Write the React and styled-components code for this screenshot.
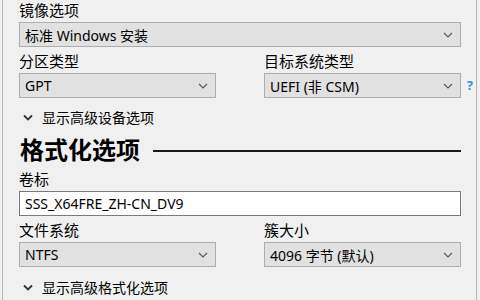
import React from "react";
import styled, { createGlobalStyle } from "styled-components";

const Global = createGlobalStyle`
  html, body {
    margin: 0;
    padding: 0;
    background: #f0f0f0;
  }
  body {
    font-family: "Noto Sans", "Noto Sans CJK SC", sans-serif;
    color: #000;
  }
`;

const Window = styled.div`
  box-sizing: border-box;
  width: 475px;
  height: 300px;
  margin-left: 2px;
  border-left: 1px solid #b4b4b4;
  border-right: 1px solid #b4b4b4;
  padding: 0 15px 0 16px;
  overflow: hidden;
`;

const Label = styled.div`
  font-size: 15px;
  line-height: 20px;
  height: 20px;
  margin-top: ${(p) => p.$top || 0}px;
  white-space: nowrap;
`;

const Field = styled.div`
  box-sizing: border-box;
  position: relative;
  height: 25px;
  margin-top: 2px;
  display: flex;
  align-items: center;
  padding: 0 24px 0 5px;
  font-size: 14px;
  white-space: nowrap;
  background: ${(p) => (p.$input ? "#ffffff" : "#e1e1e1")};
  border: 1px solid ${(p) => (p.$input ? "#7a7a7a" : "#adadad")};
`;

const Caret = styled.svg`
  position: absolute;
  right: 7px;
  top: 50%;
  margin-top: -3px;
`;

const Row = styled.div`
  display: grid;
  grid-template-columns: 197px 197px;
  column-gap: 48px;
  margin-top: ${(p) => p.$top || 0}px;
`;

const Col = styled.div`
  position: relative;
`;

const Help = styled.span`
  position: absolute;
  right: -12px;
  top: 25px;
  font-size: 13px;
  color: #3c8fd8;
  font-weight: bold;
`;

const Toggle = styled.div`
  display: flex;
  align-items: center;
  gap: 9px;
  height: 20px;
  margin-top: ${(p) => p.$top || 0}px;
  padding-left: 4px;
  font-size: 14px;
  white-space: nowrap;
`;

const Heading = styled.div`
  display: flex;
  align-items: center;
  gap: 13px;
  height: 28px;
  margin-top: ${(p) => p.$top || 0}px;
  font-size: 24px;
  font-weight: bold;
  line-height: 28px;
  padding-left: 1px;
  &::after {
    content: "";
    flex: 1;
    height: 2px;
    background: #1a1a1a;
    margin-top: 1px;
  }
`;

function Chevron() {
  return (
    <Caret width="10" height="6" viewBox="0 0 10 6">
      <polyline points="1,1 5,5 9,1" fill="none" stroke="#5a5a5a" strokeWidth="1.2" />
    </Caret>
  );
}

function Select({ children }) {
  return (
    <Field>
      {children}
      <Chevron />
    </Field>
  );
}

function Disclosure({ top, children }) {
  return (
    <Toggle $top={top}>
      <svg width="10" height="7" viewBox="0 0 10 7">
        <polyline points="1,1.5 5,5.5 9,1.5" fill="none" stroke="#333" strokeWidth="1.8" />
      </svg>
      <span>{children}</span>
    </Toggle>
  );
}

export default function App() {
  return (
    <>
      <Global />
      <Window>
        <Label $top={0}>镜像选项</Label>
        <Select>标准 Windows 安装</Select>
        <Row $top={4}>
          <Col>
            <Label>分区类型</Label>
            <Select>GPT</Select>
          </Col>
          <Col>
            <Label>目标系统类型</Label>
            <Select>UEFI (非 CSM)</Select>
            <Help>?</Help>
          </Col>
        </Row>
        <Disclosure top={9}>显示高级设备选项</Disclosure>
        <Heading $top={9}>格式化选项</Heading>
        <Label $top={5}>卷标</Label>
        <Field $input>SSS_X64FRE_ZH-CN_DV9</Field>
        <Row $top={4}>
          <Col>
            <Label>文件系统</Label>
            <Select>NTFS</Select>
          </Col>
          <Col>
            <Label>簇大小</Label>
            <Select>4096 字节 (默认)</Select>
          </Col>
        </Row>
        <Disclosure top={10}>显示高级格式化选项</Disclosure>
      </Window>
    </>
  );
}
